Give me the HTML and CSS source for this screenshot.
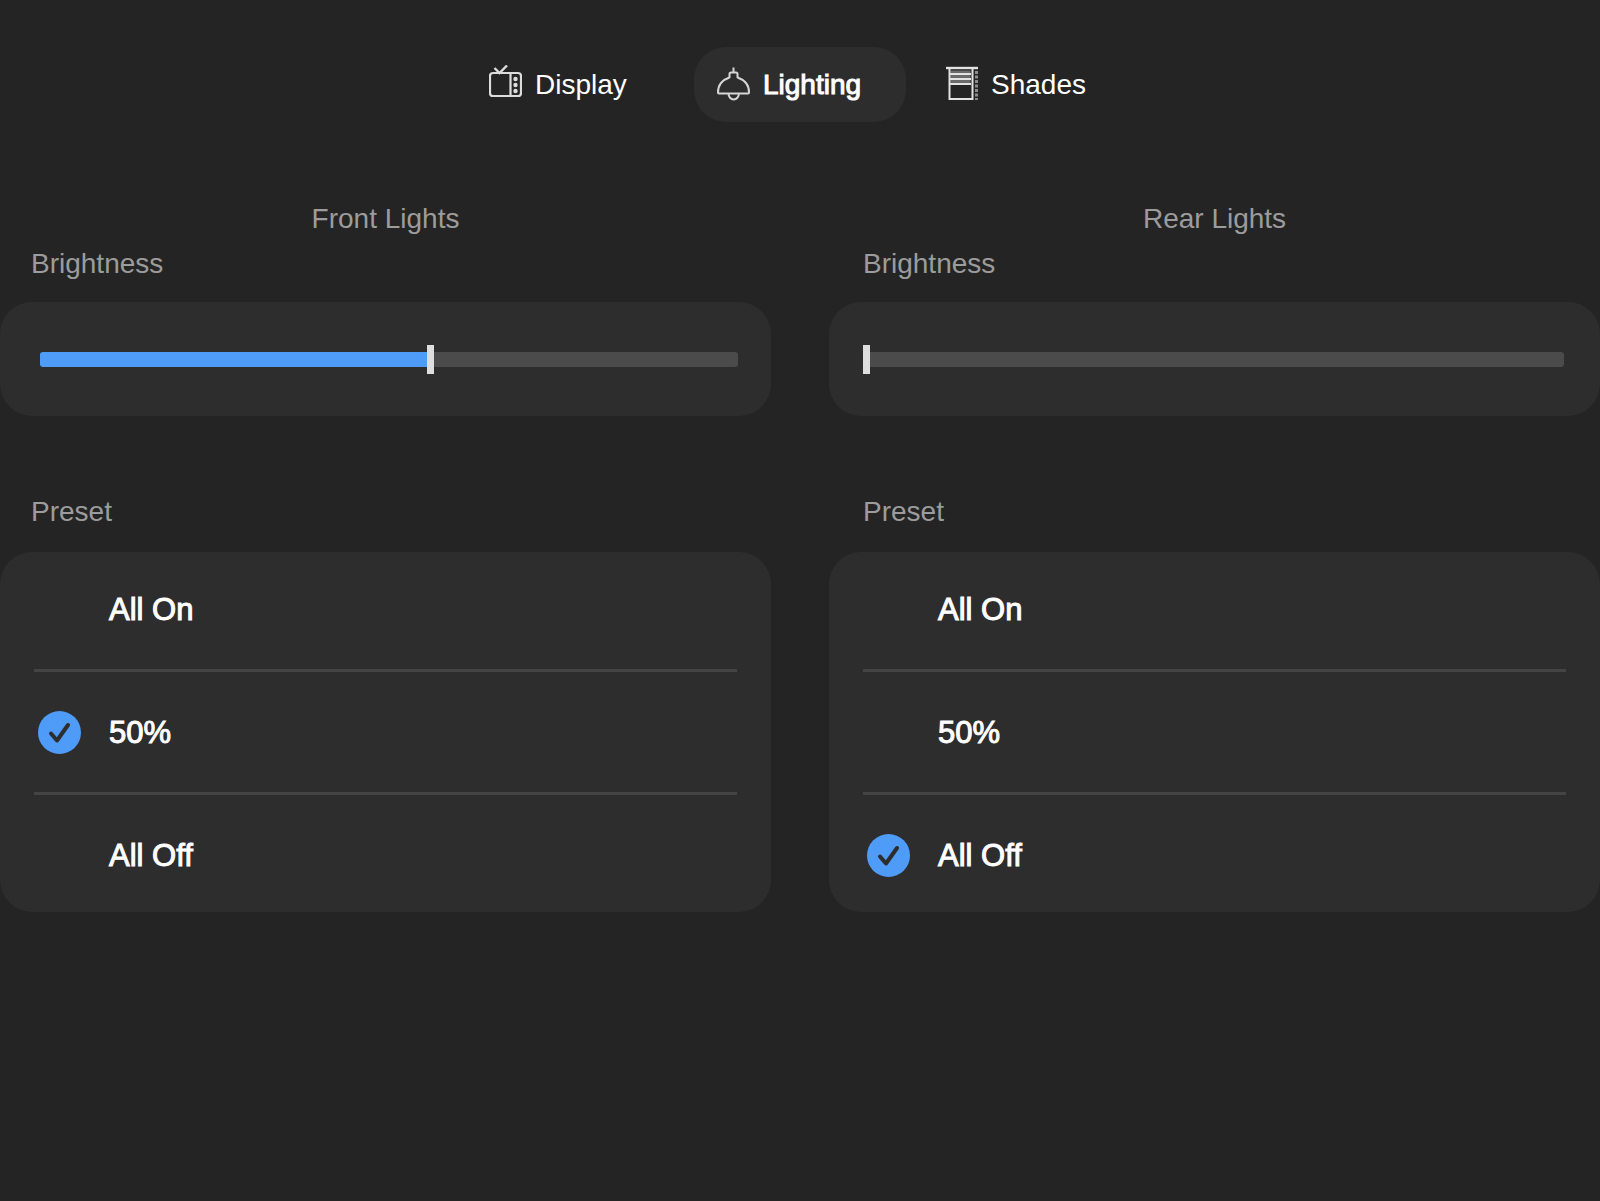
FILE: index.html
```html
<!DOCTYPE html>
<html lang="en">
<head>
  <meta charset="utf-8">
  <meta name="viewport" content="width=device-width, initial-scale=1">
  <title>Lighting</title>
  <link rel="stylesheet" href="styles.css">
</head>
<body>
  <nav class="tabs" aria-label="Room controls">
    <button class="tab" type="button">
      <svg class="tab-icon" viewBox="0 2 33 40" aria-hidden="true">
        <g fill="none" stroke="#dcdcdc" stroke-width="2.200">
          <rect x="1" y="10" width="31" height="23" rx="3"/>
          <path d="M21.500 10v23"/>
          <path d="M5.500 5l5 5L18 2.500" stroke-width="2.400"/>
        </g>
        <g fill="#dcdcdc">
          <circle cx="26.500" cy="16" r="2.200"/>
          <circle cx="26.500" cy="22" r="2.200"/>
          <circle cx="26.500" cy="28" r="2.200"/>
        </g>
      </svg>
      Display
    </button>
    <button class="tab tab-active" type="button" aria-current="page">
      <svg class="tab-icon" viewBox="0 0 33 40" aria-hidden="true">
        <g fill="none" stroke="#d6d6d6" stroke-width="2" stroke-linejoin="round">
          <path d="M16.500 2.500v5M12.500 13v-4q0-1.500 1.500-1.500h5q1.500 0 1.500 1.500v4"/>
          <path d="M12.500 12.500C5 15 1 20.500 1 27.500q0 1 1 1h29q1 0 1-1C32 20.500 28 15 20.500 12.500"/>
          <path d="M11.500 28.500a5.200 6 0 0 0 10.400 0"/>
        </g>
      </svg>
      Lighting
    </button>
    <button class="tab" type="button">
      <svg class="tab-icon" viewBox="0 0 33 40" aria-hidden="true">
        <path d="M5.500 5.500h20v13h-20z" fill="#6a6a6a"/>
        <g fill="none" stroke="#e2e2e2" stroke-width="2">
          <path d="M1 3h32" stroke-width="2.400"/>
          <path d="M4.500 3v31h23V3"/>
          <path d="M5 9h21M5 14h21M5 19h21"/>
        </g>
        <path d="M31.500 6v29" fill="none" stroke="#8c8c8c" stroke-width="3" stroke-dasharray="3 1.500"/>
      </svg>
      Shades
    </button>
  </nav>

  <main class="panels">
    <section class="panel panel-front">
      <h2 class="panel-title">Front Lights</h2>
      <label class="group-label" for="front-brightness">Brightness</label>
      <div class="card slider-card">
        <input class="slider" id="front-brightness" type="range" min="0" max="100" value="56" style="--level: 56%">
      </div>
      <fieldset class="presets">
        <legend class="group-label">Preset</legend>
        <div class="card">
          <div class="preset-list">
            <label class="preset">
              <input class="preset-radio" type="radio" name="front-preset">
              <svg class="preset-check" viewBox="0 0 43 43" aria-hidden="true"><path d="M13 22.500l6 7L30 14"/></svg>
              <span class="preset-name">All On</span>
            </label>
            <label class="preset">
              <input class="preset-radio" type="radio" name="front-preset" checked>
              <svg class="preset-check" viewBox="0 0 43 43" aria-hidden="true"><path d="M13 22.500l6 7L30 14"/></svg>
              <span class="preset-name">50%</span>
            </label>
            <label class="preset">
              <input class="preset-radio" type="radio" name="front-preset">
              <svg class="preset-check" viewBox="0 0 43 43" aria-hidden="true"><path d="M13 22.500l6 7L30 14"/></svg>
              <span class="preset-name">All Off</span>
            </label>
          </div>
        </div>
      </fieldset>
    </section>

    <section class="panel panel-rear">
      <h2 class="panel-title">Rear Lights</h2>
      <label class="group-label" for="rear-brightness">Brightness</label>
      <div class="card slider-card">
        <input class="slider" id="rear-brightness" type="range" min="0" max="100" value="0" style="--level: 0%">
      </div>
      <fieldset class="presets">
        <legend class="group-label">Preset</legend>
        <div class="card">
          <div class="preset-list">
            <label class="preset">
              <input class="preset-radio" type="radio" name="rear-preset">
              <svg class="preset-check" viewBox="0 0 43 43" aria-hidden="true"><path d="M13 22.500l6 7L30 14"/></svg>
              <span class="preset-name">All On</span>
            </label>
            <label class="preset">
              <input class="preset-radio" type="radio" name="rear-preset">
              <svg class="preset-check" viewBox="0 0 43 43" aria-hidden="true"><path d="M13 22.500l6 7L30 14"/></svg>
              <span class="preset-name">50%</span>
            </label>
            <label class="preset">
              <input class="preset-radio" type="radio" name="rear-preset" checked>
              <svg class="preset-check" viewBox="0 0 43 43" aria-hidden="true"><path d="M13 22.500l6 7L30 14"/></svg>
              <span class="preset-name">All Off</span>
            </label>
          </div>
        </div>
      </fieldset>
    </section>
  </main>
</body>
</html>
```
FILE: styles.css
```css
:root {
  --page: #242424;
  --card: #2d2d2d;
  --track: #4b4b4b;
  --divider: #444444;
  --accent: #4f9bf8;
  --muted: #9c9c9c;
}

* {
  box-sizing: border-box;
}

body {
  margin: 0;
  min-height: 100vh;
  padding-top: 47px;
  background: var(--page);
  color: #ffffff;
  font: 28px/45px "Liberation Sans", Arial, sans-serif;
}

/* Tabs */
.tabs {
  display: flex;
  justify-content: center;
  gap: 16px;
}

.tab {
  display: flex;
  align-items: center;
  gap: 13px;
  width: 212px;
  height: 75px;
  padding: 0 0 0 23px;
  border: 0;
  border-radius: 32px;
  background: none;
  color: inherit;
  font: inherit;
}

.tab-active {
  background: var(--card);
  -webkit-text-stroke: 1px currentColor;
}

.tab-icon {
  width: 33px;
  height: 40px;
  flex: none;
}

/* Panels */
.panels {
  display: grid;
  grid-template-columns: 1fr 1fr;
  gap: 58px;
  padding-top: 74px;
}

.panel {
  display: flex;
  flex-direction: column;
  min-width: 0;
}

.panel-title {
  margin: 0;
  color: var(--muted);
  font: inherit;
  text-align: center;
}

.group-label {
  display: block;
  margin-bottom: 16px;
  padding: 0 31px;
  color: var(--muted);
}

.panel-rear .group-label {
  padding: 0 34px;
}

.card {
  border-radius: 32px;
  background: var(--card);
}

/* Brightness slider */
.slider-card {
  display: flex;
  align-items: center;
  height: 114px;
  padding: 0 33px 0 40px;
}

.panel-rear .slider-card {
  padding: 0 36px 0 34px;
}

.slider {
  appearance: none;
  width: 100%;
  height: 29px;
  margin: 0;
  background: none;
}

.slider::-webkit-slider-runnable-track {
  height: 15px;
  border-radius: 3px;
  background: linear-gradient(var(--accent), var(--accent)) 0 0 / var(--level) 100% no-repeat var(--track);
}

.slider::-webkit-slider-thumb {
  appearance: none;
  width: 7px;
  height: 29px;
  margin-top: -7px;
  background: #dedede;
}

/* Presets */
.presets {
  min-width: 0;
  margin: 73px 0 0;
  padding: 0;
  border: 0;
}

.presets .group-label {
  margin-bottom: 18px;
}

.preset-list {
  margin: -3px 0;
}

.presets .card {
  display: flow-root;
}

.preset {
  display: grid;
  grid-template-columns: 43px 1fr;
  column-gap: 24px;
  align-items: center;
  height: 120px;
  margin: 0 34px;
  padding-left: 4px;
}

.preset + .preset {
  height: 123px;
  border-top: 3px solid var(--divider);
}

.preset-radio {
  appearance: none;
  grid-area: 1 / 1;
  width: 43px;
  height: 43px;
  margin: 0;
  border-radius: 50%;
}

.preset-radio:checked {
  background: var(--accent);
}

.preset-check {
  display: none;
  grid-area: 1 / 1;
  width: 43px;
  height: 43px;
  fill: none;
  stroke: var(--card);
  stroke-width: 4;
  stroke-linecap: round;
  stroke-linejoin: round;
}

.preset-radio:checked + .preset-check {
  display: block;
}

.preset-name {
  grid-area: 1 / 2;
  padding-left: 4px;
  font-size: 31px;
  -webkit-text-stroke: 1px currentColor;
}
```
